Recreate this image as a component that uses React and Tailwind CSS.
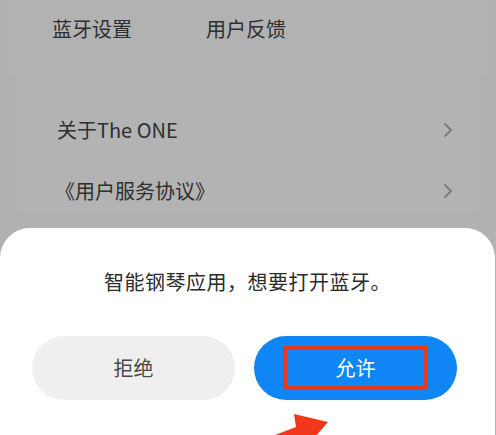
import React from 'react';

const font = { fontFamily: '"Noto Sans CJK SC", "Noto Sans", sans-serif' };

function Chevron() {
  return (
    <svg width="12" height="18" viewBox="0 0 12 18" fill="none">
      <path d="M3 3l6 6-6 6" stroke="#7a7a7a" strokeWidth="1.8" strokeLinecap="round" strokeLinejoin="round" />
    </svg>
  );
}

export default function App() {
  return (
    <div
      className="relative w-[496px] h-[435px] overflow-hidden bg-[#b1b1b1]"
      style={font}
    >
      {/* 顶部快捷项 */}
      <div className="h-[75px] mx-[8px] bg-[#b2b2b2] flex items-start pt-[14px] text-[20px] text-[#2f2f2f]">
        <span className="ml-[44px]">蓝牙设置</span>
        <span className="ml-[74px]">用户反馈</span>
      </div>

      {/* 列表 */}
      <div className="mx-[20px] mt-[2px] bg-[#b3b3b3] pt-[33px] text-[20px] text-[#2f2f2f]">
        <div className="h-[40px] flex items-center justify-between pl-[37px] pr-[22px]">
          <span>关于The ONE</span>
          <Chevron />
        </div>
        <div className="h-[40px] mt-[21px] flex items-center justify-between pl-[35px] pr-[22px]">
          <span>《用户服务协议》</span>
          <Chevron />
        </div>
      </div>

      {/* 底部弹窗 */}
      <div className="absolute left-0 right-[1px] top-[228px] bottom-0 bg-white rounded-t-[30px]">
        <p className="mt-[39px] text-center text-[20px] text-[#2b2b2b] tracking-[0.5px]">
          智能钢琴应用，想要打开蓝牙。
        </p>
        <div className="mt-[39px] flex gap-[19px] px-[32px]">
          <button className="w-[203px] h-[64px] rounded-full bg-[#efefef] text-[20px] text-[#4a4a4a]">
            拒绝
          </button>
          <button className="w-[203px] h-[64px] rounded-full bg-[#1086f6] flex items-center justify-center">
            <span className="w-[145px] h-[44px] border-[4px] border-[#e8381c] flex items-center justify-center text-[20px] text-white">
              允许
            </span>
          </button>
        </div>
      </div>

      {/* 指示箭头 */}
      <svg className="absolute left-0 top-0" width="496" height="435" viewBox="0 0 496 435">
        <polygon points="262,440 296,427 294,414 328,422 314,438" fill="#f1361a" />
      </svg>
    </div>
  );
}
